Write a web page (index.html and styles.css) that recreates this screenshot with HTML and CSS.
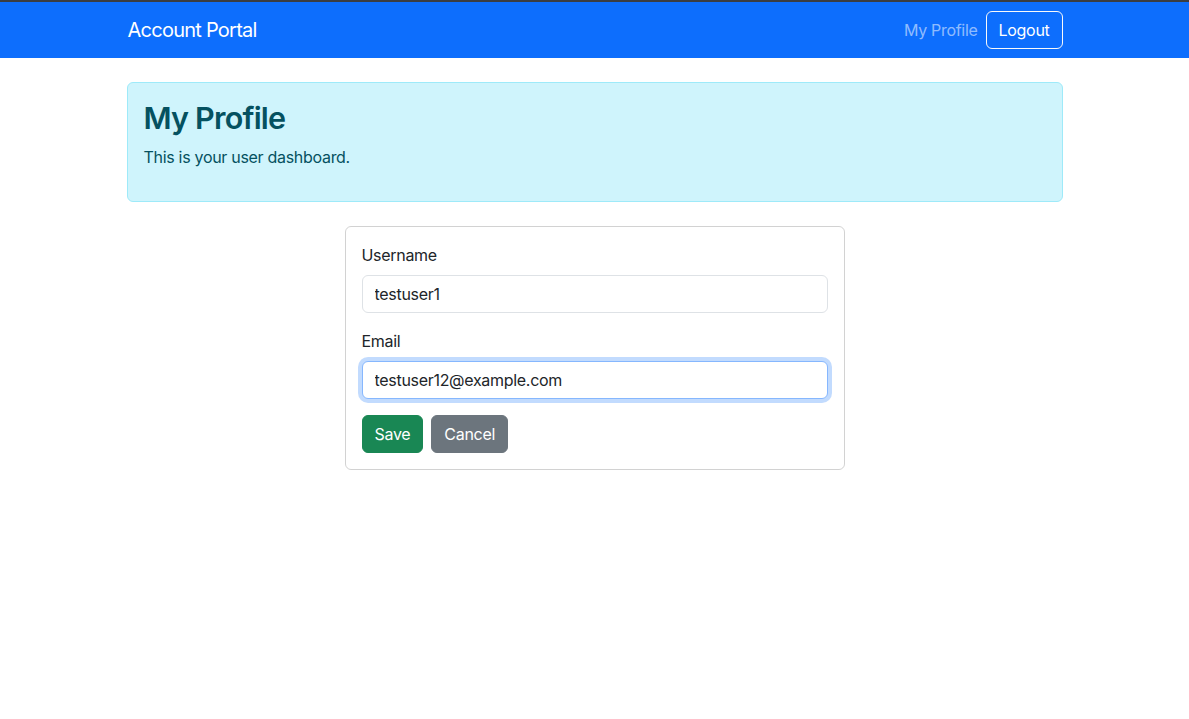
FILE: index.html
```html
<!DOCTYPE html>
<html lang="en">
<head>
<meta charset="utf-8">
<title>Account Portal</title>
<link rel="stylesheet" href="styles.css">
</head>
<body>
<nav class="navbar">
  <div class="container nav-inner">
    <a class="brand" href="#">Account Portal</a>
    <div class="nav-right">
      <a class="nav-link" href="#">My Profile</a>
      <button class="btn btn-outline-light" type="button">Logout</button>
    </div>
  </div>
</nav>
<main class="container">
  <div class="alert">
    <h2 class="alert-title">My Profile</h2>
    <p class="alert-text">This is your user dashboard.</p>
  </div>
  <div class="card">
    <form class="card-body">
      <div class="field">
        <label class="label" for="username">Username</label>
        <input class="input" id="username" type="text" value="testuser1">
      </div>
      <div class="field">
        <label class="label" for="email">Email</label>
        <input class="input input-focus" id="email" type="email" value="testuser12@example.com">
      </div>
      <div class="actions">
        <button class="btn btn-success" type="button">Save</button>
        <button class="btn btn-secondary" type="button">Cancel</button>
      </div>
    </form>
  </div>
</main>
</body>
</html>
```

FILE: styles.css
```css
* { box-sizing: border-box; }
html, body { margin: 0; padding: 0; }
body {
  font-family: Inter, "Liberation Sans", sans-serif;
  font-size: 16px;
  line-height: 1.5;
  letter-spacing: -0.3px;
  color: #212529;
  background: #fff;
}
.container {
  width: 960px;
  margin: 0 auto;
  padding: 0 12px;
}
.navbar {
  background: #0d6efd;
  border-top: 2px solid #3a3d42;
  padding: 8px 0;
}
.nav-inner {
  display: flex;
  align-items: center;
  justify-content: space-between;
}
.brand {
  color: #fff;
  text-decoration: none;
  font-size: 20px;
  line-height: 30px;
  letter-spacing: -0.75px;
  padding: 5px 0 5px 1px;
}
.nav-right {
  display: flex;
  align-items: center;
}
.nav-link {
  color: rgba(255,255,255,.55);
  text-decoration: none;
  padding: 8px;
}
.btn {
  font-family: inherit;
  font-size: 16px;
  line-height: 24px;
  letter-spacing: -0.3px;
  padding: 6px 12px;
  border: 1px solid transparent;
  border-radius: 6px;
  cursor: pointer;
}
.btn-outline-light {
  background: transparent;
  color: #fff;
  border-color: #f8f9fa;
}
.btn-success { background: #198754; border-color: #198754; color: #fff; }
.btn-secondary { background: #6c757d; border-color: #6c757d; color: #fff; }
.alert {
  margin-top: 24px;
  background: #cff4fc;
  border: 1px solid #9eeaf9;
  border-radius: 6px;
  color: #055160;
  padding: 16px;
}
.alert-title {
  margin: 0 0 8px;
  font-size: 30.5px;
  font-weight: 600;
  line-height: 38.3px;
  letter-spacing: -0.8px;
}
.alert-text { margin: 0 0 16px; }
.card {
  width: 500px;
  margin: 24px auto 0;
  border: 1px solid rgba(0,0,0,.175);
  border-radius: 6px;
}
.card-body {
  padding: 16px;
  margin: 0;
}
.field { margin-bottom: 16px; }
.label {
  display: block;
  margin-bottom: 8px;
}
.input {
  display: block;
  width: 100%;
  font-family: inherit;
  font-size: 16px;
  line-height: 24px;
  letter-spacing: -0.3px;
  padding: 6px 12px;
  color: #212529;
  background: #fff;
  border: 1px solid #dee2e6;
  border-radius: 6px;
  outline: none;
}
.input-focus {
  border-color: #86b7fe;
  box-shadow: 0 0 0 4px rgba(13,110,253,.25);
}
.actions {
  display: flex;
  gap: 8px;
}
```
